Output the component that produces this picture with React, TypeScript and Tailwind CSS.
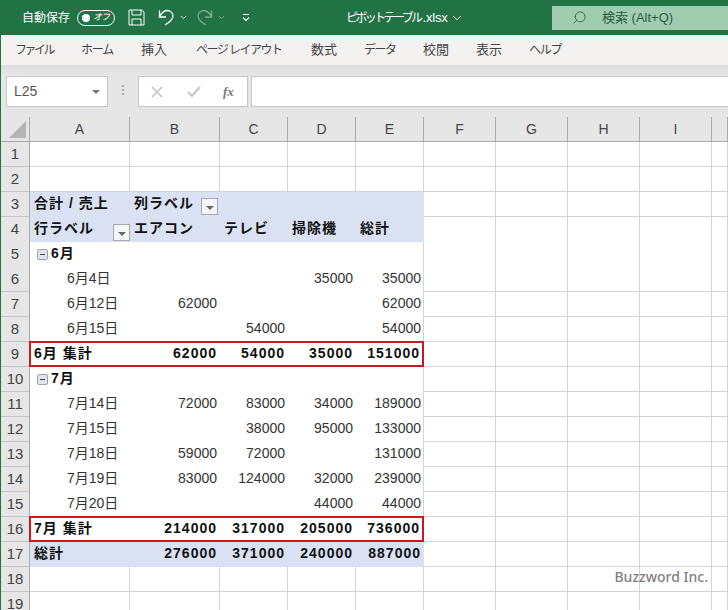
import { ChevronDown, Search } from "lucide-react";

const COLUMNS = ["A", "B", "C", "D", "E", "F", "G", "H", "I", ""];
const TABS = [
  { label: "ファイル", cls: "w-[80px] pl-[14px] text-[12px] tracking-[-2.5px]" },
  { label: "ホーム", cls: "w-[60px] text-[12px] tracking-[-1.2px]" },
  { label: "挿入", cls: "w-[55px] text-[13px]" },
  { label: "ページ レイアウト", cls: "w-[115px] text-[12px] tracking-[-1.5px]" },
  { label: "数式", cls: "w-[53px] text-[13px]" },
  { label: "データ", cls: "w-[59px] text-[12px] tracking-[-1.5px]" },
  { label: "校閲", cls: "w-[53px] text-[13px]" },
  { label: "表示", cls: "w-[53px] text-[13px]" },
  { label: "ヘルプ", cls: "w-[60px] text-[12px] tracking-[-1.2px]" }
];

type RowKind = "plain" | "head" | "group" | "subtotal" | "grand" | "blank";
type SheetRow = { n: number; kind: RowKind; a?: string; vals?: string[]; b?: string };

const ROWS: SheetRow[] = [
  { n: 1, kind: "blank" },
  { n: 2, kind: "blank" },
  { n: 3, kind: "head", a: "合計 / 売上", b: "列ラベル" },
  { n: 4, kind: "head", a: "行ラベル", vals: ["エアコン", "テレビ", "掃除機", "総計"] },
  { n: 5, kind: "group", a: "6月" },
  { n: 6, kind: "plain", a: "6月4日", vals: ["", "", "35000", "35000"] },
  { n: 7, kind: "plain", a: "6月12日", vals: ["62000", "", "", "62000"] },
  { n: 8, kind: "plain", a: "6月15日", vals: ["", "54000", "", "54000"] },
  { n: 9, kind: "subtotal", a: "6月 集計", vals: ["62000", "54000", "35000", "151000"] },
  { n: 10, kind: "group", a: "7月" },
  { n: 11, kind: "plain", a: "7月14日", vals: ["72000", "83000", "34000", "189000"] },
  { n: 12, kind: "plain", a: "7月15日", vals: ["", "38000", "95000", "133000"] },
  { n: 13, kind: "plain", a: "7月18日", vals: ["59000", "72000", "", "131000"] },
  { n: 14, kind: "plain", a: "7月19日", vals: ["83000", "124000", "32000", "239000"] },
  { n: 15, kind: "plain", a: "7月20日", vals: ["", "", "44000", "44000"] },
  { n: 16, kind: "subtotal", a: "7月 集計", vals: ["214000", "317000", "205000", "736000"] },
  { n: 17, kind: "grand", a: "総計", vals: ["276000", "371000", "240000", "887000"] },
  { n: 18, kind: "blank" },
  { n: 19, kind: "blank" }
];

const GRID = "grid grid-cols-[29px_100px_90px_68px_68px_68px_72px_72px_72px_72px_16px]";

function FilterButton({ className }: { className: string }) {
  return (
    <span className={`absolute flex h-[17px] w-[17px] items-center justify-center border border-[#a9a9a9] bg-[#f4f5f8] ${className}`}>
      <span className="mt-[2px] h-0 w-0 border-x-[4px] border-t-[4px] border-x-transparent border-t-[#666]" />
    </span>
  );
}

function Collapse() {
  return (
    <span className="flex h-[11px] w-[11px] shrink-0 items-center justify-center rounded-[2px] border border-[#9aa3b2] bg-[#e0e4ea]">
      <span className="h-[1px] w-[5px] bg-[#444]" />
    </span>
  );
}

function Row({ row }: { row: SheetRow }) {
  const blank = row.kind === "blank";
  const bold = row.kind !== "plain" && !blank;
  const fill = row.kind === "head" || row.kind === "grand" ? "bg-[#d9e1f2]" : "bg-white";
  const line = blank
    ? "border-b border-r border-[#d4d4d4]"
    : row.n === 4 || row.n === 5
      ? "border-b border-[#9fb2d2]"
      : "";
  const indent = row.kind === "plain" ? "pl-[37px]" : "pl-[4px]";
  const weight = bold ? "font-bold text-[#111] tracking-[1px]" : "text-[#333]";
  const frameColor = row.n === 9 ? "border-[#c01d22]" : "border-[#d3141b]";

  return (
    <div className={`${GRID} relative h-[25px] text-[14px] leading-[22px]`}>
      <div className="border-b border-r border-b-[#c4c4c4] border-r-[#a9a9a9] bg-[#e6e6e6] text-center text-[15px] leading-[24px] text-[#444]">{row.n}</div>
      <div className={`relative flex items-center gap-[3px] whitespace-nowrap pb-[3px] ${fill} ${line} ${indent} ${weight}`}>
        {row.kind === "group" && <span className="ml-[3px] mt-[2px]"><Collapse /></span>}
        {row.a}
        {row.n === 4 && <FilterButton className="right-[0px] top-[7px]" />}
      </div>
      {[0, 1, 2, 3].map((i) => {
        const value = row.vals?.[i] ?? "";
        const isHeader = row.n === 4;
        const hasEdge = i === 3 && !blank && row.kind !== "head" && row.kind !== "grand";
        const edge = hasEdge ? "border-r border-r-[#d4d4d4]" : "";
        const pad = isHeader
          ? "pl-[4px] text-left"
          : bold
            ? "pr-[3px] text-right"
            : hasEdge
              ? "pr-[2px] text-right"
              : "pr-[3px] text-right";
        return (
          <div key={i} className={`relative whitespace-nowrap ${fill} ${line} ${edge} ${pad} ${weight}`}>
            {row.n === 3 && i === 0 ? <span className="absolute left-[4px]">{row.b}</span> : value}
            {row.n === 3 && i === 0 && <FilterButton className="right-[2px] top-[6px]" />}
          </div>
        );
      })}
      {[0, 1, 2, 3, 4, 5].map((i) => (
        <div key={i} className="border-b border-r border-[#d4d4d4] bg-white" />
      ))}
      {row.kind === "subtotal" && (
        <div className={`pointer-events-none absolute bottom-0 left-[28px] top-[-1px] w-[395px] border-2 ${frameColor}`} />
      )}
    </div>
  );
}

export default function App() {
  return (
    <div className="flex h-[610px] w-[728px] flex-col overflow-hidden border-l border-[#217346] bg-[#e6e6e6] font-['Liberation_Sans','Noto_Sans_CJK_JP',sans-serif]">
      <header className="-ml-[1px] flex h-[35px] shrink-0 items-center bg-[#217346] text-white">
        <span className="ml-[22px] text-[12px]">自動保存</span>
        <span className="ml-[7px] flex h-[16px] w-[38px] items-center justify-between rounded-full border border-white pl-[4px] pr-[5px]">
          <span className="h-[8px] w-[8px] rounded-full bg-white" />
          <span className="text-[9px] italic tracking-[-1px]">オフ</span>
        </span>
        <svg className="ml-[13px]" width="17" height="17" viewBox="0 0 17 17" fill="none" stroke="white" strokeWidth="1">
          <path d="M1 1h13l2 2v13H1z" />
          <path d="M4 1v5h9V1M4 16v-6h9v6" />
        </svg>
        <svg className="ml-[13px]" width="17" height="17" viewBox="0 0 17 17" fill="none" stroke="white" strokeWidth="1.3">
          <path d="M1.500 1.500v6.500h6.500M1.500 8C3.500 4 6 1.500 9 1.500c3.500 0 6 2.500 6 5.500s-3 6-8 9" />
        </svg>
        <ChevronDown className="ml-[4px]" size={9} strokeWidth={2.5} />
        <svg className="ml-[8px] opacity-40" width="17" height="17" viewBox="0 0 17 17" fill="none" stroke="white" strokeWidth="1.3">
          <path d="M15.500 1.500v6.500H9M15.500 8C13.500 4 11 1.500 8 1.500c-3.500 0-6 2.500-6 5.500s3 6 8 9" />
        </svg>
        <ChevronDown className="ml-[4px] opacity-40" size={9} strokeWidth={2.5} />
        <svg className="ml-[16px]" width="8" height="9" viewBox="0 0 8 9" fill="none" stroke="white" strokeWidth="1.2">
          <path d="M1 1.500h6M1 4.500l3 3 3-3" />
        </svg>
        <span className="ml-[96px] flex items-center whitespace-nowrap">
          <span className="text-[12px] tracking-[-2.6px]">ピボットテーブル</span>
          <span className="ml-[2px] text-[13px] tracking-[-0.2px]">.xlsx</span>
          <ChevronDown className="ml-[2px]" size={14} strokeWidth={1.5} />
        </span>
        <div className="ml-auto flex h-[24px] w-[176px] items-center bg-[#a0cdb0] text-[13px] text-[#2a5c40]">
          <Search className="ml-[20px] -scale-x-100" size={15} strokeWidth={1.3} />
          <span className="ml-[15px]">検索 (Alt+Q)</span>
        </div>
      </header>

      <nav className="flex h-[30px] shrink-0 items-center bg-[#f3f2f1] text-[#444]">
        {TABS.map((t) => (
          <span key={t.label} className={`${t.cls} whitespace-nowrap`}>
            {t.label}
          </span>
        ))}
      </nav>

      <div className="flex h-[52px] shrink-0 items-start bg-gradient-to-b from-[#dcdcdc] from-0% via-[#e6e6e6] via-20% to-[#e6e6e6] pt-[11px]">
        <div className="ml-[5px] flex h-[31px] w-[102px] items-center justify-between border border-[#c6c6c6] bg-white pl-[7px] pr-[7px] text-[14px] text-[#555]">
          L25
          <span className="h-0 w-0 border-x-[4px] border-t-[4px] border-x-transparent border-t-[#777]" />
        </div>
        <span className="ml-[14px] mt-[9px] flex flex-col gap-[2px]">
          <span className="h-[2px] w-[2px] bg-[#aaa]" />
          <span className="h-[2px] w-[2px] bg-[#aaa]" />
          <span className="h-[2px] w-[2px] bg-[#aaa]" />
        </span>
        <div className="ml-[14px] flex h-[31px] w-[110px] items-center border border-[#c6c6c6] bg-white text-[#bbb]">
          <svg className="ml-[12px]" width="12" height="12" viewBox="0 0 12 12" fill="none" stroke="#c4c4c4" strokeWidth="1.500">
            <path d="M1 1l10 10M11 1L1 11" />
          </svg>
          <svg className="ml-[24px]" width="14" height="12" viewBox="0 0 14 12" fill="none" stroke="#c4c4c4" strokeWidth="2">
            <path d="M1 6l4 4 8-9" />
          </svg>
          <span className="ml-[22px] font-['Liberation_Serif'] text-[13px] font-bold italic text-[#777]">fx</span>
        </div>
        <div className="ml-[3px] h-[31px] flex-1 border-y border-l border-[#c6c6c6] bg-white" />
      </div>

      <div className={`${GRID} h-[25px] shrink-0 text-center text-[14px] leading-[24px] text-[#444]`}>
        <div className="relative border-b border-r border-[#a9a9a9]">
          <span className="absolute bottom-[3px] right-[3px] h-0 w-0 border-b-[17px] border-l-[17px] border-b-[#b4b4b4] border-l-transparent" />
        </div>
        {COLUMNS.map((c, i) => (
          <div key={i} className="border-b border-r border-[#a9a9a9]">
            {c}
          </div>
        ))}
      </div>

      <div className="relative flex-1">
        {ROWS.map((r) => (
          <Row key={r.n} row={r} />
        ))}
        <span className="absolute right-[20px] top-[424px] font-['Noto_Sans'] text-[14px] font-medium text-[#7f7f7f]">Buzzword Inc.</span>
      </div>
    </div>
  );
}
